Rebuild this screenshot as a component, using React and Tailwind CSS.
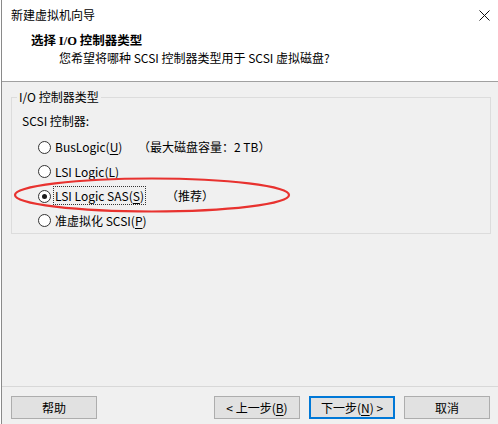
import React from 'react';

const cjk = "font-['Noto_Sans_CJK_SC','Noto_Sans',sans-serif]";

const Radio = ({ checked }) => (
  <span className="w-[13px] h-[13px] rounded-full border border-[#333] bg-white flex items-center justify-center shrink-0">
    {checked && <span className="w-[5px] h-[5px] rounded-full bg-[#1a1a1a]" />}
  </span>
);

const Key = ({ children }) => <span className="underline underline-offset-2">{children}</span>;

const Btn = ({ children, primary }) => (
  <button
    className={
      'w-[86px] h-[23px] bg-[#e1e1e1] text-[12px] text-black flex items-center justify-center ' +
      (primary ? 'border-2 border-[#0078d7]' : 'border border-[#adadad]')
    }
  >
    {children}
  </button>
);

export default function App() {
  const options = [
    { label: <>BusLogic(<Key>U</Key>)</>, note: '（最大磁盘容量：2 TB）', w: 'w-[84px]' },
    { label: <>LSI Logic(<Key>L</Key>)</> },
    { label: <>LSI Logic SAS(<Key>S</Key>)</>, note: '（推荐）', w: 'w-[112px]', checked: true },
    { label: <>准虚拟化 SCSI(<Key>P</Key>)</> },
  ];

  return (
    <div className={`w-[498px] h-[424px] bg-[#f0f0f0] flex flex-col relative overflow-hidden ${cjk} text-[12px] text-black border-l border-[#8a8a8a] ml-[1px]`}>
      {/* Header */}
      <div className="h-[82px] bg-white border-b border-[#a0a0a0] flex flex-col shrink-0">
        <div className="h-[30px] flex items-center justify-between pl-[9px] pr-[8px]">
          <span className="text-[12px] leading-none">新建虚拟机向导</span>
          <svg width="11" height="11" viewBox="0 0 11 11" className="mr-[1px]">
            <path d="M0.5 0.5 L10.5 10.5 M10.5 0.5 L0.5 10.5" stroke="#111" strokeWidth="1" />
          </svg>
        </div>
        <div className="pl-[29px] pt-[2px] font-bold text-[12.5px] leading-[16px]">
          选择 <span className="font-['Liberation_Serif',serif]">I/O</span> 控制器类型
        </div>
        <div className="pl-[57px] pt-[1px] text-[12px] leading-[16px]">
          您希望将哪种 SCSI 控制器类型用于 SCSI 虚拟磁盘?
        </div>
      </div>

      {/* Body */}
      <div className="flex-1 px-[9px] pt-[9px] relative">
        <fieldset className="border border-[#dcdcdc] h-[143px] w-[480px] pl-[10px]">
          <legend className="ml-[-5px] px-[2px] text-[12px] leading-[12px]">I/O 控制器类型</legend>
          <div className="mt-[10px] leading-[16px]">SCSI 控制器:</div>
          <div className="mt-[10px] flex flex-col gap-[8.5px] pl-[16px]">
            {options.map((o, i) => (
              <div key={i} className="flex items-center h-[16px]">
                <Radio checked={o.checked} />
                <span className={'ml-[3px] shrink-0 ' + (o.w || '')}>
                  <span
                    className={
                      'px-[1px] leading-[14px] ' +
                      (o.checked ? 'outline outline-1 outline-dotted outline-[#333]' : '')
                    }
                  >
                    {o.label}
                  </span>
                </span>
                {o.note && <span>{o.note}</span>}
              </div>
            ))}
          </div>
        </fieldset>

        {/* annotation */}
        <svg className="absolute left-[0px] top-[89px]" width="300" height="50" viewBox="0 0 300 50">
          <ellipse cx="150" cy="24" rx="137" ry="16.5" fill="none" stroke="#e8322f" strokeWidth="2.2" />
        </svg>
      </div>

      {/* Footer */}
      <div className="h-[38px] border-t border-[#d8d8d8] shrink-0 flex items-start pt-[9px] px-[9px]">
        <Btn>帮助</Btn>
        <div className="flex-1" />
        <Btn>
          &lt; 上一步(<Key>B</Key>)
        </Btn>
        <div className="w-[9px]" />
        <Btn primary>
          下一步(<Key>N</Key>) &gt;
        </Btn>
        <div className="w-[9px]" />
        <Btn>取消</Btn>
      </div>
    </div>
  );
}
